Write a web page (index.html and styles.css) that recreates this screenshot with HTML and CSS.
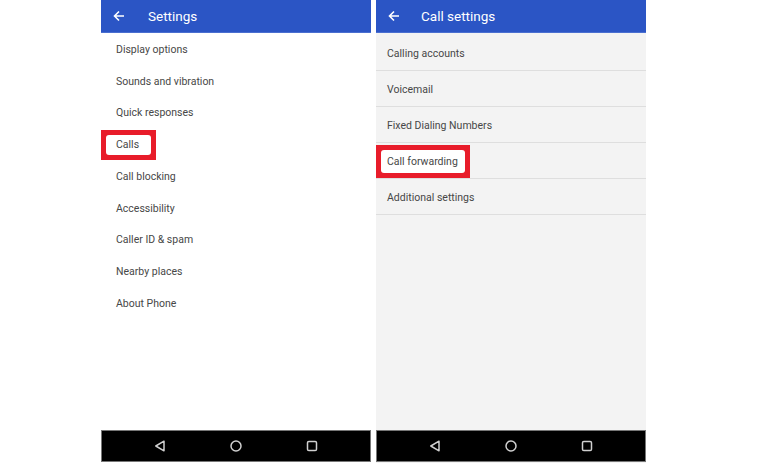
FILE: index.html
```html
<!DOCTYPE html>
<html>
<head>
<meta charset="utf-8">
<link rel="stylesheet" href="styles.css">
</head>
<body>
<div class="page">
  <section class="panel panel-left">
    <header class="bar">
      <svg class="back" width="12" height="12" viewBox="0 0 12 12"><path d="M11 6H2M6 1.5L1.5 6 6 10.5" fill="none" stroke="#fff" stroke-width="1.6"/></svg>
      <span class="title">Settings</span>
    </header>
    <ul class="list plain">
      <li>Display options</li>
      <li>Sounds and vibration</li>
      <li>Quick responses</li>
      <li><span class="mark mark-a"><span class="inner">Calls</span></span></li>
      <li>Call blocking</li>
      <li>Accessibility</li>
      <li>Caller ID &amp; spam</li>
      <li>Nearby places</li>
      <li>About Phone</li>
    </ul>
    <nav class="nav">
      <svg width="12" height="12" viewBox="0 0 12 12"><path d="M10 1.2V10.8L1.8 6Z" fill="none" stroke="#d0d0d0" stroke-width="1.5" stroke-linejoin="round"/></svg>
      <svg width="12" height="12" viewBox="0 0 12 12"><circle cx="6" cy="6" r="5" fill="none" stroke="#d0d0d0" stroke-width="1.5"/></svg>
      <svg width="12" height="12" viewBox="0 0 12 12"><rect x="1.5" y="1.5" width="9" height="9" rx="1.3" fill="none" stroke="#d0d0d0" stroke-width="1.5"/></svg>
    </nav>
  </section>
  <section class="panel panel-right">
    <header class="bar">
      <svg class="back" width="12" height="12" viewBox="0 0 12 12"><path d="M11 6H2M6 1.5L1.5 6 6 10.5" fill="none" stroke="#fff" stroke-width="1.6"/></svg>
      <span class="title">Call settings</span>
    </header>
    <ul class="list ruled">
      <li>Calling accounts</li>
      <li>Voicemail</li>
      <li>Fixed Dialing Numbers</li>
      <li><span class="mark mark-b"><span class="inner">Call forwarding</span></span></li>
      <li>Additional settings</li>
    </ul>
    <nav class="nav">
      <svg width="12" height="12" viewBox="0 0 12 12"><path d="M10 1.2V10.8L1.8 6Z" fill="none" stroke="#d0d0d0" stroke-width="1.5" stroke-linejoin="round"/></svg>
      <svg width="12" height="12" viewBox="0 0 12 12"><circle cx="6" cy="6" r="5" fill="none" stroke="#d0d0d0" stroke-width="1.5"/></svg>
      <svg width="12" height="12" viewBox="0 0 12 12"><rect x="1.5" y="1.5" width="9" height="9" rx="1.3" fill="none" stroke="#d0d0d0" stroke-width="1.5"/></svg>
    </nav>
  </section>
</div>
</body>
</html>
```
FILE: styles.css
```css
* { box-sizing: border-box; }
html, body { margin: 0; padding: 0; background: #fff; }
body { font-family: Roboto, "Noto Sans", sans-serif; color: #474747; }
.page {
  display: flex;
  gap: 5px;
  padding-left: 101px;
  height: 463px;
}
.panel {
  width: 270px;
  height: 463px;
  display: flex;
  flex-direction: column;
}
.panel-left { background: #fff; }
.panel-right { background: #f3f3f3; }
.bar {
  height: 33px;
  flex: none;
  background: #2b55c5;
  display: flex;
  align-items: center;
  color: #fff;
  border-bottom: 1px solid #4a6fd0;
}
.back { margin-left: 12px; flex: none; }
.title { font-size: 13.5px; margin-left: 23px; }
.panel-right .title { margin-left: 21px; }
.list {
  list-style: none;
  margin: 0;
  padding: 0;
  flex: 1;
  font-size: 10.5px;
}
.plain li {
  height: 31.75px;
  display: flex;
  align-items: center;
  padding-left: 15px;
}
.plain { padding-top: 0.5px; }
.ruled { padding-top: 1.5px; }
.ruled li {
  height: 36px;
  display: flex;
  align-items: center;
  padding-left: 11px;
  padding-top: 2px;
  border-bottom: 1.5px solid #dedede;
}
.mark {
  display: inline-flex;
  background: #e81c2a;
  padding: 5px;
  position: relative;
  z-index: 1;
}
.inner {
  background: #fff;
  border-radius: 3px;
  display: inline-flex;
  align-items: center;
}
.mark-a { margin-left: -15px; }
.mark-a .inner { height: 20px; width: 45px; padding-left: 10px; }
.mark-b { margin-left: -11px; }
.mark-b .inner { height: 23px; width: 84px; padding-left: 6px; }
.nav {
  height: 32px;
  flex: none;
  background: #000;
  border: 1px solid #777;
  margin-bottom: 1px;
  display: flex;
  justify-content: center;
  align-items: center;
  gap: 64px;
}
```
